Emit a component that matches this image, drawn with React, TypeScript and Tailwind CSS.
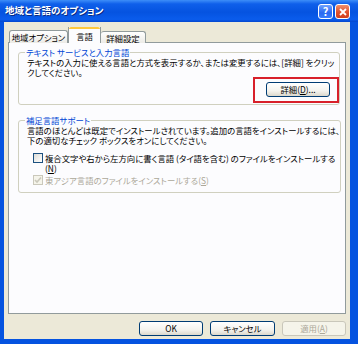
const tabBase = 'flex items-center justify-center border border-b-0 border-[#919B9C] rounded-t-[3px]';

function Mn({ children }: { children: string }) {
  return <span className="underline underline-offset-[1px]">{children}</span>;
}

function XpButton({ children, disabled = false, className = '' }: { children: React.ReactNode; disabled?: boolean; className?: string }) {
  return (
    <div
      className={
        'flex h-[15px] items-center justify-center rounded-[3px] border leading-none ' +
        (disabled
          ? 'border-[#C9C7BA] bg-[#F5F4EA] text-[#ACA899] '
          : 'border-[#003C74] bg-[linear-gradient(180deg,#FFFFFF_0%,#F4F3EE_60%,#DCD8CC_100%)] text-black ') +
        className
      }
    >
      {children}
    </div>
  );
}

function CheckBox({ checked = false, disabled = false }: { checked?: boolean; disabled?: boolean }) {
  return (
    <div
      className={
        'flex h-[10px] w-[10px] shrink-0 items-center justify-center border ' +
        (disabled ? 'border-[#CAC8BB] bg-[#F5F4EA]' : 'border-[#1C5180] bg-[linear-gradient(135deg,#DCDCD7,#FFFFFF)]')
      }
    >
      {checked && (
        <svg width="8" height="8" viewBox="0 0 8 8">
          <path d="M1 4 L3 6 L7 1.5" fill="none" stroke={disabled ? '#CAC8BB' : '#21A121'} strokeWidth="1.6" />
        </svg>
      )}
    </div>
  );
}

export default function App() {
  return (
    <div className="flex h-[344px] w-[358px] flex-col overflow-hidden bg-[#0553E0] font-['Noto_Sans_CJK_JP','Noto_Sans',sans-serif] text-[8.4px] leading-[10px] text-black [font-feature-settings:'palt']">
      {/* title bar */}
      <div className="flex h-[22px] shrink-0 items-center justify-between bg-[linear-gradient(180deg,#3D8EF8_0%,#0F5FEA_18%,#0553E0_55%,#0A5CEC_88%,#0447CE_100%)] pl-[5px] pr-[8px]">
        <span className="text-[9.5px] font-bold leading-none text-white [text-shadow:1px_1px_0_#0A2A80]">地域と言語のオプション</span>
        <div className="flex items-center gap-[2px] pt-[1px]">
          <div className="flex h-[15px] w-[15px] items-center justify-center rounded-[3px] border border-white bg-[linear-gradient(180deg,#6FA2FF,#2A68F0_60%,#3A7CFF)] text-[11px] font-bold leading-none text-white">
            ?
          </div>
          <div className="flex h-[15px] w-[15px] items-center justify-center rounded-[3px] border border-white bg-[linear-gradient(180deg,#F0906C,#E0502C_55%,#D0401E)]">
            <svg width="8" height="8" viewBox="0 0 8 8">
              <path d="M1 1 L7 7 M7 1 L1 7" stroke="#FFFFFF" strokeWidth="1.8" />
            </svg>
          </div>
        </div>
      </div>

      {/* client area */}
      <div className="mb-[5px] ml-[4px] mr-[8px] flex flex-1 flex-col bg-[#ECE9D8] px-[4px] pt-[5px]">
        {/* tabs */}
        <div className="relative z-10 flex h-[16px] items-end pl-[1px]">
          <div className={tabBase + ' h-[13px] w-[59px] bg-[linear-gradient(180deg,#FFFFFF,#ECEBE6)]'}>地域オプション</div>
          <div className="flex h-[16px] w-[33px] flex-col border-x border-[#919B9C] bg-[#FCFCFE]">
            <div className="h-[2px] rounded-t-[2px] bg-[#FFC83C]" />
            <div className="flex flex-1 items-center justify-center">言語</div>
          </div>
          <div className={tabBase + ' h-[12px] w-[45px] border-l-0 bg-[linear-gradient(180deg,#FFFFFF,#ECEBE6)]'}>詳細設定</div>
        </div>

        {/* panel */}
        <div className="-mt-px flex h-[272px] flex-col border border-[#919B9C] bg-[#FCFCFE] pl-[9px] pr-[5px] pt-[4px]">
          <fieldset className="rounded-[3px] border border-[#D0D0BF] pb-[1px] pl-[8px]">
            <legend className="ml-[-2px] px-[1px] text-[#0046D5]">テキスト サービスと入力言語</legend>
            <p className="whitespace-nowrap">
              テキストの入力に使える言語と方式を表示するか、または変更するには、[詳細] をクリッ
              <br />
              クしてください。
            </p>
            <div className="flex justify-end">
              <div className="border-2 border-[#D8202A] pb-[4px] pl-[11px] pr-[7px] pt-[3px]">
                <XpButton className="w-[64px]">
                  詳細(<Mn>D</Mn>)...
                </XpButton>
              </div>
            </div>
          </fieldset>

          <fieldset className="mt-[10px] rounded-[3px] border border-[#D0D0BF] pb-[7px] pl-[8px]">
            <legend className="ml-[-2px] px-[1px] text-[#0046D5]">補足言語サポート</legend>
            <p className="whitespace-nowrap">
              言語のほとんどは既定でインストールされています。追加の言語をインストールするには、
              <br />
              下の適切なチェック ボックスをオンにしてください。
            </p>
            <div className="mt-[8px] flex gap-[2px] pl-[6px]">
              <div className="flex h-[10px] items-center">
                <CheckBox />
              </div>
              <div>
                <div className="whitespace-nowrap">複合文字や右から左方向に書く言語 (タイ語を含む) のファイルをインストールする</div>
                <div>
                  (<Mn>N</Mn>)
                </div>
              </div>
            </div>
            <div className="mt-[2px] flex gap-[2px] pl-[6px] text-[#ACA899]">
              <div className="flex h-[10px] items-center">
                <CheckBox checked disabled />
              </div>
              <div>
                東アジア言語のファイルをインストールする(<Mn>S</Mn>)
              </div>
            </div>
          </fieldset>
        </div>

        {/* buttons */}
        <div className="flex justify-end gap-[7px] pr-[0px] pt-[7px]">
          <XpButton className="w-[64px]">OK</XpButton>
          <XpButton className="w-[65px]">キャンセル</XpButton>
          <XpButton className="w-[64px]" disabled>
            適用(<Mn>A</Mn>)
          </XpButton>
        </div>
      </div>
    </div>
  );
}
